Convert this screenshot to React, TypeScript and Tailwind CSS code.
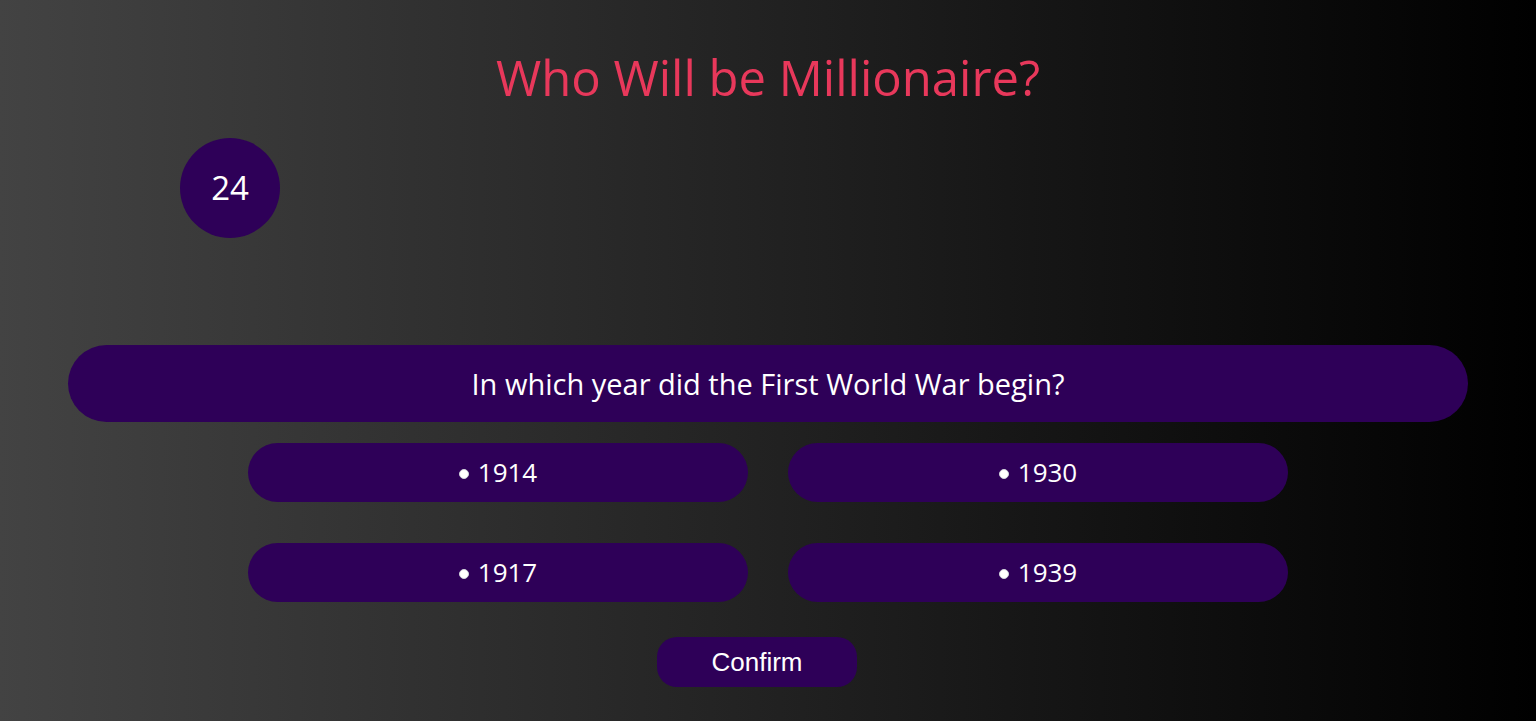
const answers = ["1914", "1930", "1917", "1939"];

export default function App() {
  return (
    <div
      className="min-h-screen w-full bg-[linear-gradient(to_right,#434343_0%,#000000_100%)] overflow-hidden"
      style={{ fontFamily: "'Open Sans', 'Noto Sans', sans-serif" }}
    >
      {/* Title */}
      <h1 className="pt-[45px] text-center text-[49px] leading-[65px] font-normal text-[#e8385b]">
        Who Will be Millionaire?
      </h1>

      {/* Timer */}
      <div className="mt-[28px] pl-[180px]">
        <div className="w-[100px] h-[100px] rounded-full bg-[#2e0058] flex items-center justify-center text-white text-[33px]">
          24
        </div>
      </div>

      {/* Question */}
      <div className="mt-[107px] mx-[68px] h-[77px] rounded-[40px] bg-[#2e0058] flex items-center justify-center text-white text-[29px]">
        In which year did the First World War begin?
      </div>

      {/* Answers */}
      <div className="mt-[21px] mx-auto w-[1040px] grid grid-cols-2 gap-x-[40px] gap-y-[41px]">
        {answers.map((a) => (
          <button
            key={a}
            className="h-[59px] rounded-[30px] bg-[#2e0058] flex items-center justify-center gap-[9px] text-white text-[26px]"
          >
            <span className="w-[10px] h-[10px] rounded-full bg-white border border-gray-300 mt-[2px]" />
            <span>{a}</span>
          </button>
        ))}
      </div>

      {/* Confirm */}
      <div className="mt-[35px] pl-[657px]">
        <button
          className="w-[200px] h-[50px] rounded-[20px] bg-[#2e0058] text-white text-[26px] leading-none"
          style={{ fontFamily: "'Liberation Sans', Arial, sans-serif" }}
        >
          Confirm
        </button>
      </div>
    </div>
  );
}
